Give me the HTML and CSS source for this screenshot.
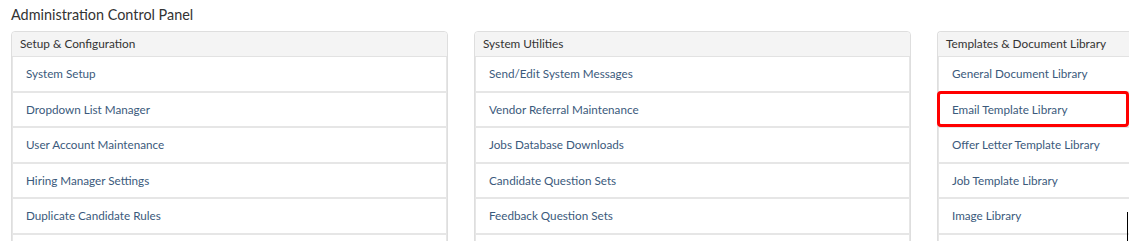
FILE: index.html
```html
<!DOCTYPE html>
<html>
<head>
<meta charset="utf-8">
<link rel="stylesheet" href="styles.css">
</head>
<body>
<div class="page">
  <h1 class="title">Administration Control Panel</h1>
  <div class="panels">
    <section class="panel panel-a">
      <div class="panel-head">Setup &amp; Configuration</div>
      <ul class="list">
        <li class="item">System Setup</li>
        <li class="item">Dropdown List Manager</li>
        <li class="item">User Account Maintenance</li>
        <li class="item">Hiring Manager Settings</li>
        <li class="item">Duplicate Candidate Rules</li>
        <li class="item">&nbsp;</li>
      </ul>
    </section>
    <section class="panel panel-b">
      <div class="panel-head">System Utilities</div>
      <ul class="list">
        <li class="item">Send/Edit System Messages</li>
        <li class="item">Vendor Referral Maintenance</li>
        <li class="item">Jobs Database Downloads</li>
        <li class="item">Candidate Question Sets</li>
        <li class="item">Feedback Question Sets</li>
        <li class="item">&nbsp;</li>
      </ul>
    </section>
    <section class="panel panel-cut">
      <div class="panel-head">Templates &amp; Document Library</div>
      <ul class="list">
        <li class="item">General Document Library</li>
        <li class="item">Email Template Library<span class="mark"></span></li>
        <li class="item">Offer Letter Template Library</li>
        <li class="item">Job Template Library</li>
        <li class="item">Image Library<span class="caret"></span></li>
        <li class="item">&nbsp;</li>
      </ul>
    </section>
  </div>
</div>
</body>
</html>
```

FILE: styles.css
```css
html, body {
  margin: 0;
  padding: 0;
  background: #fff;
  overflow: hidden;
}
body {
  font-family: "Lato", "Liberation Sans", sans-serif;
  color: #333;
  width: 1139px;
  height: 241px;
}
.page {
  padding-left: 11px;
}
.title {
  margin: 0;
  font-weight: normal;
  font-size: 14.4px;
  line-height: 18px;
  padding-top: 6px;
  height: 25px;
  color: #333;
}
.panels {
  display: flex;
  gap: 26px;
  width: 1118px;
}
.panel {
  flex: none;
  border: 1px solid #dedede;
  border-radius: 4px;
  background: #fff;
}
.panel-a {
  width: 435px;
}
.panel-b {
  width: 435px;
}
.panel-cut {
  flex: 1;
  border-right: none;
  border-top-right-radius: 0;
}
.panel-head {
  background: #f4f4f4;
  height: 24px;
  line-height: 24px;
  padding-left: 8px;
  font-size: 11.8px;
  color: #333;
  border-bottom: 1px solid #e2e2e2;
  border-radius: 4px 4px 0 0;
}
.panel-cut .panel-head {
  border-top-right-radius: 0;
}
.list {
  list-style: none;
  margin: 0;
  padding: 0;
}
.item {
  position: relative;
  height: 33.5px;
  line-height: 33.5px;
  padding-left: 13px;
  font-size: 11.7px;
  color: #3b5a7c;
  border-bottom: 2px solid #e6e6e6;
  border-left: 1px solid #e6e6e6;
  border-right: 1px solid #e6e6e6;
}
.panel-cut .item {
  border-right: none;
}
.mark {
  position: absolute;
  left: -2px;
  right: 0;
  top: -2px;
  bottom: -1px;
  border: 3px solid #f00;
  border-radius: 4px;
}
.caret {
  position: absolute;
  right: 1px;
  top: 13px;
  width: 1px;
  height: 30px;
  background: #000;
}
```
